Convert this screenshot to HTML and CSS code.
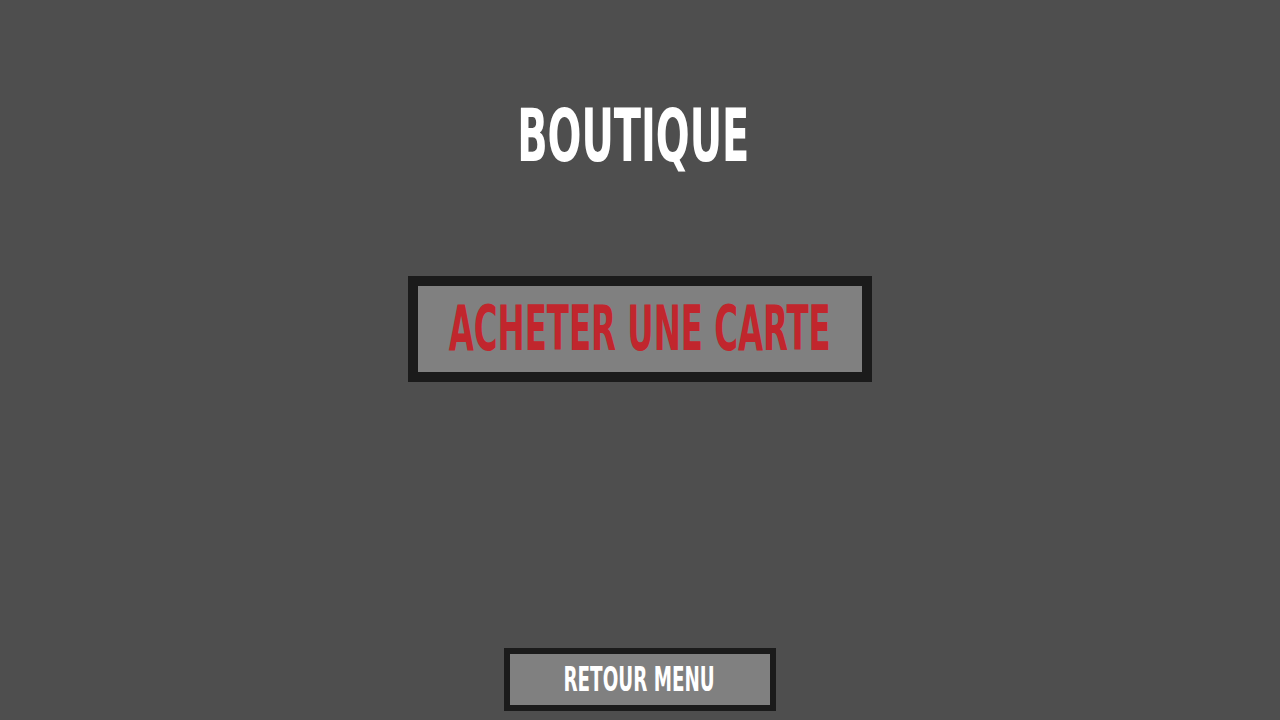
FILE: index.html
```html
<!DOCTYPE html>
<html lang="fr">
<head>
<meta charset="utf-8">
<title>Boutique</title>
<link rel="stylesheet" href="styles.css">
</head>
<body>
<main class="screen">
  <h1 class="title"><span class="squeeze squeeze-title">BOUTIQUE</span></h1>
  <button class="shop-btn" type="button"><span class="squeeze squeeze-shop">ACHETER UNE CARTE</span></button>
  <div class="spacer"></div>
  <button class="back-btn" type="button"><span class="squeeze squeeze-back">RETOUR MENU</span></button>
</main>
</body>
</html>
```
FILE: styles.css
```css
html, body {
  margin: 0;
  padding: 0;
}
body {
  background: #4e4e4e;
  font-family: "DejaVu Sans Condensed", "Liberation Sans Narrow", "Liberation Sans", sans-serif;
  font-weight: bold;
}
.screen {
  height: 720px;
  display: flex;
  flex-direction: column;
  align-items: center;
  box-sizing: border-box;
  padding-top: 96px;
  padding-bottom: 9px;
}
.squeeze {
  display: inline-block;
  white-space: nowrap;
}
.squeeze-title {
  transform: scaleX(0.607);
}
.squeeze-shop {
  transform: scaleX(0.581);
}
.squeeze-back {
  transform: scaleX(0.6);
}
.title {
  margin: 0 0 0 -13px;
  color: #ffffff;
  font-size: 73px;
  line-height: 80px;
  font-weight: bold;
}
.shop-btn {
  margin: 100px 0 0 -1px;
  width: 464px;
  height: 106px;
  box-sizing: border-box;
  border: 10px solid #1b1b1b;
  background: #808080;
  color: #c1262d;
  font-family: inherit;
  font-weight: bold;
  font-size: 62px;
  line-height: 1;
  padding: 0 0 1px;
  display: flex;
  align-items: center;
  justify-content: center;
}
.spacer {
  flex: 1;
}
.back-btn {
  margin-left: -1px;
  width: 272px;
  height: 63px;
  box-sizing: border-box;
  border: 6px solid #1b1b1b;
  background: #808080;
  color: #ffffff;
  font-family: inherit;
  font-weight: bold;
  font-size: 34px;
  line-height: 1;
  padding: 0 0 1px;
  display: flex;
  align-items: center;
  justify-content: center;
}
```
